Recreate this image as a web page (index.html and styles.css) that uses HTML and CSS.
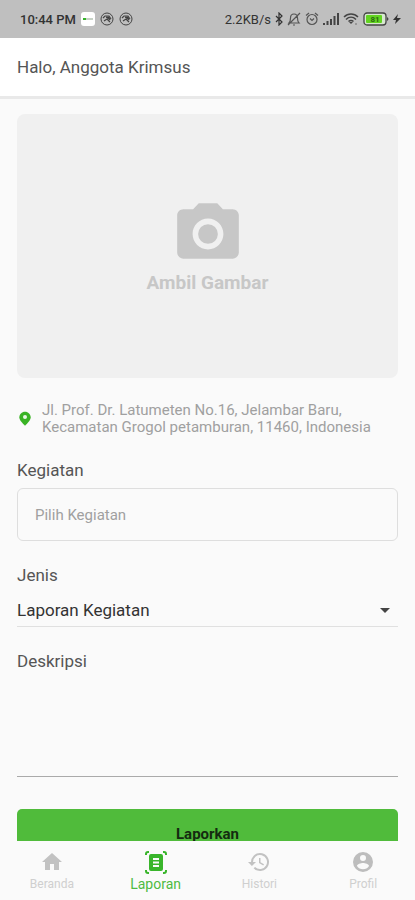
FILE: index.html
```html
<!DOCTYPE html>
<html lang="id">
<head>
<meta charset="utf-8">
<meta name="viewport" content="width=device-width, initial-scale=1">
<title>Laporan</title>
<link rel="stylesheet" href="styles.css">
</head>
<body>
<div class="app">
  <div class="status">
    <div class="status-group status-left">
      <span class="clock">10:44 PM</span>
      <svg width="14" height="14" viewBox="0 0 14 14"><rect width="14" height="14" rx="3" fill="#fff"/><path d="M2 7h3" stroke="#35b32a" stroke-width="2"/><path d="M5 7h7" stroke="#8fa58d" stroke-width="1"/></svg>
      <svg width="14" height="14" viewBox="0 0 14 14" fill="none" stroke="#444"><circle cx="7" cy="7" r="6"/><path d="M3 6l2-2h4l2 3M4 9l3-2 3 3" stroke-width="1.2"/><path d="M6 5h3l1 3z" fill="#333"/></svg>
      <svg width="14" height="14" viewBox="0 0 14 14" fill="none" stroke="#444"><circle cx="7" cy="7" r="6"/><path d="M3 6l2-2h4l2 3M4 9l3-2 3 3" stroke-width="1.2"/><path d="M6 5h3l1 3z" fill="#333"/></svg>
    </div>
    <div class="status-group status-right">
      <span class="speed">2.2KB/s</span>
      <svg width="8" height="14" viewBox="0 0 8 14" fill="none" stroke="#333" stroke-width="1.2"><path d="M1 4l6 6-3 3V1l3 3-6 6"/></svg>
      <svg width="14" height="14" viewBox="0 0 14 14" fill="none" stroke="#555" stroke-width="1.2"><path d="M2 11h10c-1-1-1.500-2-1.500-5S9 2 7 2 3.500 3.500 3.500 6 3 10 2 11zM6 13h2M1 13L13 1"/></svg>
      <svg width="14" height="14" viewBox="0 0 14 14" fill="none" stroke="#555" stroke-width="1.200"><circle cx="7" cy="7.500" r="5"/><path d="M1 3.500L4 1M13 3.500L10 1M5 6.500l2 2 2-2"/></svg>
      <svg width="16" height="12" viewBox="0 0 16 12" fill="#444"><path d="M0 10h2v2H0zM3.500 8h2v4h-2zM7 6h2v6H7zM10.500 3h2v9h-2zM14 0h2v12h-2z"/></svg>
      <svg width="16" height="14" viewBox="0 0 16 14" fill="none" stroke="#444" stroke-width="1.500"><path d="M1 5c4-4 10-4 14 0M3 7.500c3-3 7-3 10 0M5.500 9.500c1.500-1.500 3.500-1.500 5 0"/><path d="M6 10h4l-2 2z" fill="#444" stroke="none"/><path d="M13 11v2" stroke="#888"/></svg>
      <svg width="26" height="14" viewBox="0 0 26 14"><rect x="1" y="1" width="22" height="12" rx="3" fill="#d8e8d0" stroke="#444" stroke-width="1.300"/><rect x="3" y="3" width="16" height="8" rx="1" fill="#62d420"/><path d="M24 5c2 1 2 3 0 4z" fill="#444"/><text x="12" y="10" class="battery-text">81</text></svg>
      <svg width="8" height="12" viewBox="0 0 8 12" fill="#333"><path d="M5 1L0 7h3l-1 4 6-6H4z"/></svg>
    </div>
  </div>

  <header class="header"><h1>Halo, Anggota Krimsus</h1></header>

  <main class="content">
    <form class="form">
      <button type="button" class="photo">
        <svg width="74" height="74" viewBox="0 0 24 24" fill="#c7c7c7"><circle cx="12" cy="12" r="3.200"/><path d="M9 2L7.170 4H4c-1.100 0-2 .9-2 2v12c0 1.100.9 2 2 2h16c1.100 0 2-.9 2-2V6c0-1.100-.9-2-2-2h-3.170L15 2H9zm3 15c-2.760 0-5-2.240-5-5s2.240-5 5-5 5 2.240 5 5-2.240 5-5 5z"/></svg>
        <span>Ambil Gambar</span>
      </button>

      <div class="address">
        <svg width="16" height="16" viewBox="0 0 24 24" fill="#39b324"><path d="M12 1C7.200 1 3.500 4.700 3.500 9.400 3.500 15 12 22 12 22s8.500-7 8.500-12.600C20.500 4.700 16.800 1 12 1z"/><circle cx="12" cy="9" r="3" fill="#e9f8e6"/></svg>
        <p>Jl. Prof. Dr. Latumeten No.16, Jelambar Baru, Kecamatan Grogol petamburan, 11460, Indonesia</p>
      </div>

      <label class="label" for="kegiatan">Kegiatan</label>
      <input class="box" id="kegiatan" type="text" placeholder="Pilih Kegiatan">

      <label class="label" for="jenis">Jenis</label>
      <div class="select-wrap">
        <select id="jenis"><option>Laporan Kegiatan</option></select>
        <svg class="caret" width="10" height="5" viewBox="0 0 10 5" fill="#444"><path d="M0 0h10L5 5z"/></svg>
      </div>

      <label class="label" for="deskripsi">Deskripsi</label>
      <textarea id="deskripsi"></textarea>

      <button type="submit" class="submit">Laporkan</button>
    </form>
  </main>

  <nav class="nav">
    <a href="#beranda"><svg width="24" height="24" viewBox="0 0 24 24" fill="#c2c2c2"><path d="M10 20v-6h4v6h5v-8h3L12 3 2 12h3v8z"/></svg><span>Beranda</span></a>
    <a href="#laporan" class="active" aria-current="page"><svg width="24" height="24" viewBox="0 0 24 24" fill="none" stroke="#39b52b" stroke-width="2"><path d="M2 5V4q0-2 2-2h1M19 2h1q2 0 2 2v1M22 20v1q0 2-2 2h-1M5 23H4q-2 0-2-2v-1"/><path d="M7 5h10q1 0 1 1v13q0 1-1 1H7q-1 0-1-1V6q0-1 1-1z" fill="#39b52b"/><path d="M9 9h6M9 12.500h6M9 16h6" stroke="#fafafa"/></svg><span>Laporan</span></a>
    <a href="#histori"><svg width="24" height="24" viewBox="0 0 24 24" fill="#c2c2c2"><path d="M13 3a9 9 0 0 0-9 9H1l3.890 3.890.07.14L9 12H6a7 7 0 1 1 2.060 4.940l-1.420 1.420A9 9 0 1 0 13 3zm-1 5v5l4.280 2.540.72-1.210-3.500-2.080V8z"/></svg><span>Histori</span></a>
    <a href="#profil"><svg width="24" height="24" viewBox="0 0 24 24" fill="#bdbdbd"><path d="M12 2a10 10 0 1 0 0 20 10 10 0 0 0 0-20zm0 3a3 3 0 1 1 0 6 3 3 0 0 1 0-6zm0 14.200a7.200 7.200 0 0 1-6-3.220c.03-1.990 4-3.080 6-3.080s5.970 1.090 6 3.080a7.200 7.200 0 0 1-6 3.220z"/></svg><span>Profil</span></a>
  </nav>
</div>
</body>
</html>
```
FILE: styles.css
```css
* { box-sizing: border-box; }

body {
  margin: 0;
  background: #fafafa;
  color: #555;
  font-family: Roboto, "Liberation Sans", sans-serif;
}

button, input, select, textarea { font-family: inherit; }

.app {
  display: flex;
  flex-direction: column;
  height: 100vh;
}

.status {
  display: flex;
  justify-content: space-between;
  align-items: center;
  flex: none;
  height: 38px;
  padding: 0 14px 0 20px;
  background: #bfbfbf;
  color: #333;
  font-weight: 500;
}

.status-group { display: flex; align-items: center; }
.status-left { gap: 5px; }
.status-right { gap: 4px; }
.clock { font-size: 13px; }
.speed { font-size: 13px; font-weight: 400; }

.battery-text {
  font-size: 8px;
  font-weight: 700;
  fill: #2c6a12;
  text-anchor: middle;
}

.header {
  display: flex;
  align-items: center;
  flex: none;
  height: 61px;
  padding: 0 17px;
  background: #fff;
  border-bottom: 3px solid #e9e9e9;
}

.header h1 {
  margin: 0;
  font-size: 17px;
  font-weight: 400;
}

.content {
  flex: 1;
  min-height: 0;
  overflow-y: auto;
  scrollbar-width: none;
}

.form {
  display: flex;
  flex-direction: column;
  padding: 15px 17px 24px;
}

.photo {
  display: flex;
  flex-direction: column;
  align-items: center;
  justify-content: center;
  height: 264px;
  padding: 0;
  border: 0;
  border-radius: 8px;
  background: #f0f0f0;
  color: #c7c7c7;
  font-size: 19px;
  font-weight: 700;
  line-height: 24px;
}

.address {
  display: flex;
  align-items: center;
  gap: 9px;
  margin: 24px 0;
  color: #a0a0a0;
  font-size: 15px;
  line-height: 17px;
}

.address svg { flex: none; }
.address p { margin: 0; }

.label {
  font-size: 17px;
  line-height: 20px;
}

.box {
  height: 53px;
  margin: 8px 0 24px;
  padding: 0 17px;
  border: 1px solid #dedede;
  border-radius: 6px;
  background: transparent;
  font-size: 15px;
}

.box::placeholder { color: #a0a0a0; }

.select-wrap {
  position: relative;
  margin: 8px 0 24px;
}

.select-wrap select {
  width: 100%;
  height: 34px;
  padding: 0;
  border: 0;
  border-bottom: 1px solid #e0e0e0;
  border-radius: 0;
  background: transparent;
  color: #333;
  font-size: 17px;
  appearance: none;
}

.caret {
  position: absolute;
  top: 15px;
  right: 8px;
  pointer-events: none;
}

textarea {
  height: 98px;
  margin: 8px 0 32px;
  padding: 8px 0;
  border: 0;
  border-bottom: 1px solid #aaa;
  background: transparent;
  font-size: 17px;
  resize: none;
}

.submit {
  height: 50px;
  padding: 0;
  border: 0;
  border-radius: 5px;
  background: #50bb3b;
  color: #142b10;
  font-size: 15px;
  font-weight: 700;
}

.nav {
  display: flex;
  flex: none;
  height: 59px;
  background: #fafafa;
}

.nav a {
  display: flex;
  flex: 1;
  flex-direction: column;
  align-items: center;
  padding-top: 9px;
  color: #cfcfcf;
  font-size: 12px;
  line-height: 20px;
  text-decoration: none;
}

.nav .active {
  color: #4fbb42;
  font-size: 14px;
}
```
